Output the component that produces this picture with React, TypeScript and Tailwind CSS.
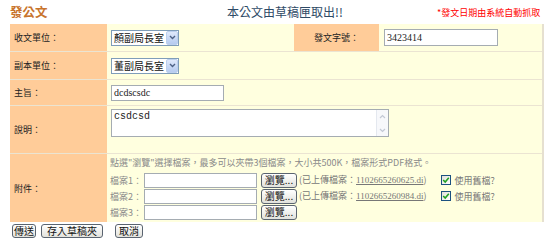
import React from "react";

const cjk = { fontFamily: '"Noto Sans CJK TC", "Liberation Sans", sans-serif' };
const serif = { fontFamily: '"Liberation Serif", "Noto Sans CJK TC", serif' };
const mono = { fontFamily: '"Liberation Mono", monospace' };

function FakeSelect({ text }: { text: string }) {
  return (
    <div className="flex h-[16px] w-[68px] items-center overflow-hidden border border-[#7f9db9] bg-white">
      <div className="flex-1 whitespace-nowrap pl-[2px] text-[10px] leading-none text-[#111]">{text}</div>
      <div className="flex h-[14px] w-[12px] shrink-0 items-center justify-center rounded-[2px] border border-[#bcd0ee] bg-gradient-to-b from-[#dfe9fb] to-[#b6cbef]">
        <svg width="7" height="5" viewBox="0 0 7 5">
          <path d="M1 1 L3.5 3.5 L6 1" fill="none" stroke="#4d6185" strokeWidth="1.4" />
        </svg>
      </div>
    </div>
  );
}

function XpButton({ children, className = "" }: { children: React.ReactNode; className?: string }) {
  return (
    <div
      className={`flex items-center justify-center rounded-[3px] border border-[#5a6470] bg-gradient-to-b from-[#ffffff] to-[#e2e2dc] text-[10px] leading-none text-[#111] ${className}`}
      style={cjk}
    >
      {children}
    </div>
  );
}

function CheckBox() {
  return (
    <div className="flex h-[10px] w-[10px] items-center justify-center border border-[#1c5180] bg-gradient-to-br from-[#e0e0d8] to-[#ffffff]">
      <svg width="8" height="8" viewBox="0 0 8 8">
        <path d="M1.2 4 L3.2 6 L6.8 1.8" fill="none" stroke="#21a121" strokeWidth="1.6" />
      </svg>
    </div>
  );
}

function FileRow({ n, uploaded }: { n: number; uploaded?: string }) {
  return (
    <div className="flex h-[16px] items-center">
      <div className="w-[34px] text-[9px] leading-none text-[#8a8a8a]" style={cjk}>
        檔案{n}：
      </div>
      <div className="h-[15px] w-[113px] border border-[#a5acb2] bg-white" />
      <XpButton className="ml-[4px] h-[15px] w-[36px]">瀏覽...</XpButton>
      {uploaded && (
        <>
          <div className="ml-[2px] whitespace-nowrap text-[9px] leading-none text-[#777]" style={cjk}>
            (已上傳檔案：<span className="underline" style={serif}>{uploaded}</span>)
          </div>
          <div className="ml-[14px]">
            <CheckBox />
          </div>
          <div className="ml-[4px] text-[9px] leading-none text-[#777]" style={cjk}>
            使用舊檔?
          </div>
        </>
      )}
    </div>
  );
}

const sep = "border-b border-[#ebe4d2]";
const label = "flex w-[97px] shrink-0 items-center bg-[#ffcc99] pl-[4px] text-[9px] leading-none text-[#222]";
const value = "flex items-center bg-[#ffffdf]";

export default function App() {
  return (
    <div className="h-[247px] w-[554px] bg-white" style={cjk}>
      {/* Title row */}
      <div className="relative flex h-[24px] items-center pl-[10px]">
        <div className="w-[217px] text-[12.5px] font-semibold leading-none text-[#c8742c]">發公文</div>
        <div className="w-[210px] text-[12px] leading-none text-[#2e4a66]">本公文由草稿匣取出!!</div>
        <div className="text-[9px] leading-none text-[#ff0000]">*發文日期由系統自動抓取</div>
      </div>

      {/* Table */}
      <div className="ml-[10px] w-[534px] border-r-2 border-[#e6e0d0]">
        {/* Row 1 */}
        <div className={`flex h-[28px] ${sep}`}>
          <div className={label}>收文單位：</div>
          <div className={`${value} w-[187px] pl-[4px]`}>
            <FakeSelect text="顏副局長室" />
          </div>
          <div className="flex w-[85px] items-center justify-center bg-[#ffcc99] text-[9px] leading-none text-[#222]">
            發文字號：
          </div>
          <div className={`${value} flex-1 pl-[5px]`}>
            <div className="flex h-[17px] w-[114px] items-center border border-[#a5acb2] bg-white pl-[2px] text-[10px] leading-none text-[#222]" style={serif}>
              3423414
            </div>
          </div>
        </div>

        {/* Row 2 */}
        <div className={`flex h-[28px] ${sep}`}>
          <div className={label}>副本單位：</div>
          <div className={`${value} flex-1 pl-[4px]`}>
            <FakeSelect text="董副局長室" />
          </div>
        </div>

        {/* Row 3 */}
        <div className={`flex h-[26px] ${sep}`}>
          <div className={label}>主旨：</div>
          <div className={`${value} flex-1 pl-[4px]`}>
            <div className="flex h-[16px] w-[113px] items-center border border-[#a5acb2] bg-white pl-[2px] text-[10px] leading-none text-[#222]" style={serif}>
              dcdscsdc
            </div>
          </div>
        </div>

        {/* Row 4 */}
        <div className={`flex h-[48px] ${sep}`}>
          <div className={label}>說明：</div>
          <div className="flex flex-1 items-start bg-[#ffffdf] pl-[4px] pt-[3px]">
            <div className="flex h-[28px] w-[278px] border border-[#a5acb2] bg-white">
              <div className="flex-1 pl-[2px] pt-[2px] text-[10px] leading-none text-[#222]" style={mono}>
                csdcsd
              </div>
              <div className="flex w-[12px] flex-col justify-between border-l border-[#e4e8ef] bg-[#f7f8fb] py-[1px]">
                <div className="flex h-[10px] items-center justify-center">
                  <svg width="7" height="5" viewBox="0 0 7 5">
                    <path d="M1 4 L3.5 1.5 L6 4" fill="none" stroke="#c3c9d5" strokeWidth="1.2" />
                  </svg>
                </div>
                <div className="flex h-[10px] items-center justify-center">
                  <svg width="7" height="5" viewBox="0 0 7 5">
                    <path d="M1 1 L3.5 3.5 L6 1" fill="none" stroke="#c3c9d5" strokeWidth="1.2" />
                  </svg>
                </div>
              </div>
            </div>
          </div>
        </div>

        {/* Row 5 */}
        <div className="flex h-[68px]">
          <div className={label}>附件：</div>
          <div className="flex flex-1 flex-col bg-[#ffffdf] pl-[3px] pt-[3px]">
            <div className="h-[15px] whitespace-nowrap text-[9px] leading-[12px] text-[#8a8a8a]">
              點選"瀏覽"選擇檔案，最多可以夾帶3個檔案，大小共500K，檔案形式PDF格式。
            </div>
            <FileRow n={1} uploaded="1102665260625.di" />
            <FileRow n={2} uploaded="1102665260984.di" />
            <FileRow n={3} />
          </div>
        </div>
      </div>

      {/* Buttons */}
      <div className="ml-[12px] mt-[2px] flex items-center">
        <XpButton className="h-[14px] w-[24px]">傳送</XpButton>
        <XpButton className="ml-[5px] h-[14px] w-[62px]">存入草稿夾</XpButton>
        <XpButton className="ml-[12px] h-[14px] w-[28px]">取消</XpButton>
      </div>
    </div>
  );
}
